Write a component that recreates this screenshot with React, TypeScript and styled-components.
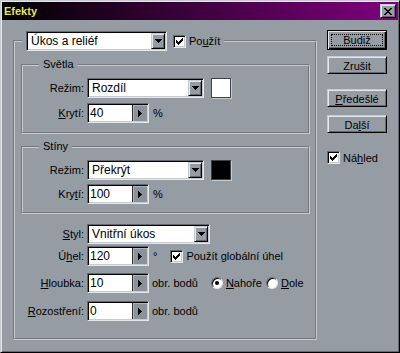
import React from 'react'
import styled, { createGlobalStyle, css } from 'styled-components'

const C = {
  face: '#959ca4',
  light: '#c6cbd0',
  hi: '#e4e7ea',
  shadow: '#62686e',
  spin: '#8b9299',
  title: '#ece44c',
}

const GlobalStyle = createGlobalStyle`
  html, body { margin: 0; padding: 0; }
  body {
    background: ${C.face};
    font-family: "Liberation Sans", Arial, sans-serif;
    font-size: 11px;
    color: #000;
  }
  * { box-sizing: border-box; }
`

const Window = styled.div`
  width: 400px;
  height: 353px;
  background: ${C.face};
  border: 1px solid;
  border-color: ${C.light} #000 #000 ${C.light};
  box-shadow: inset 1px 1px 0 ${C.hi}, inset -1px -1px 0 ${C.shadow};
  padding: 1px;
  display: flex;
  flex-direction: column;
`

const TitleBar = styled.div`
  height: 18px;
  flex: none;
  display: flex;
  align-items: center;
  justify-content: space-between;
  padding: 0 2px 0 2px;
  background: linear-gradient(to right, #000 0%, #80007f 100%);
`

const Title = styled.span`
  color: ${C.title};
  font-weight: bold;
  font-size: 11px;
`

const raised = css`
  background: ${C.face};
  border: 1px solid;
  border-color: ${C.light} #000 #000 ${C.light};
  box-shadow: inset 1px 1px 0 ${C.hi}, inset -1px -1px 0 ${C.shadow};
`

const CloseButton = styled.div`
  ${raised};
  width: 16px;
  height: 14px;
  display: flex;
  align-items: center;
  justify-content: center;
`

const Body = styled.div`
  flex: 1;
  display: flex;
  align-items: flex-start;
  padding: 11px 0 0 11px;
`

const Group = styled.fieldset<{ $w: number; $mt?: number }>`
  margin: ${p => p.$mt ?? 0}px 0 0 0;
  padding: 0;
  min-width: 0;
  width: ${p => p.$w}px;
  border: 2px groove ${C.light};
`

const Legend = styled.legend<{ $ml: number }>`
  margin-left: ${p => p.$ml}px;
  padding: 0 4px;
  line-height: 13px;
`

const LegendRow = styled.div`
  display: flex;
  align-items: center;
`

const GroupInner = styled.div<{ $pad: string }>`
  padding: ${p => p.$pad};
`

const Row = styled.div<{ $mt?: number }>`
  display: flex;
  align-items: center;
  height: 20px;
  margin-top: ${p => p.$mt ?? 0}px;
`

const Label = styled.label<{ $w: number }>`
  flex: none;
  width: ${p => p.$w}px;
  margin-right: 3px;
  text-align: right;
  white-space: nowrap;
`

const Text = styled.span<{ $ml?: number }>`
  margin-left: ${p => p.$ml ?? 0}px;
  white-space: nowrap;
`

const U = styled.span`
  text-decoration: underline;
  text-underline-offset: 1px;
`

const Field = styled.div<{ $w: number }>`
  flex: none;
  width: ${p => p.$w}px;
  height: 20px;
  display: flex;
  background: #fff;
  border: 1px solid;
  border-color: ${C.shadow} ${C.hi} ${C.hi} ${C.shadow};
  padding: 1px;
  box-shadow: inset 1px 1px 0 #000, inset -1px -1px 0 ${C.light};
`

const FieldText = styled.div`
  flex: 1;
  min-width: 0;
  padding-left: 3px;
  line-height: 16px;
  font-size: 12px;
  white-space: nowrap;
  overflow: hidden;
`

const SpinText = styled(FieldText)`
  padding-left: 1px;
`

const DropButton = styled.div`
  ${raised};
  flex: none;
  width: 14px;
  display: flex;
  align-items: center;
  justify-content: center;
`

const SpinButton = styled.div`
  flex: none;
  width: 15px;
  display: flex;
  align-items: center;
  justify-content: center;
  background: ${C.spin};
  border-left: 1px solid #2c3035;
  box-shadow: inset 1px 1px 0 #aeb4ba;
`

const Swatch = styled.div<{ $color: string }>`
  flex: none;
  width: 20px;
  height: 20px;
  margin-left: 7px;
  background: ${p => p.$color};
  border: 1px solid #3c4147;
  box-shadow: 1px 1px 0 ${C.light};
`

const Check = styled.label<{ $ml?: number; $mt?: number }>`
  display: flex;
  align-items: center;
  margin-left: ${p => p.$ml ?? 0}px;
  margin-top: ${p => p.$mt ?? 0}px;
  white-space: nowrap;
`

const CheckBox = styled.span`
  flex: none;
  width: 13px;
  height: 13px;
  margin-right: 3px;
  display: flex;
  align-items: center;
  justify-content: center;
  background: #fff;
  border: 1px solid;
  border-color: ${C.shadow} ${C.hi} ${C.hi} ${C.shadow};
  box-shadow: inset 1px 1px 0 #000, inset -1px -1px 0 ${C.light};
`

const RadioCircle = styled.span`
  flex: none;
  width: 12px;
  height: 12px;
  margin-right: 3px;
  border-radius: 50%;
  display: flex;
  align-items: center;
  justify-content: center;
  background: #fff;
  border: 1px solid;
  border-color: ${C.shadow} ${C.hi} ${C.hi} ${C.shadow};
  box-shadow: inset 1px 1px 0 #000;
`

const Dot = styled.span`
  width: 4px;
  height: 4px;
  border-radius: 50%;
  background: #000;
`

const Side = styled.div`
  margin-left: 10px;
  display: flex;
  flex-direction: column;
  width: 60px;
`

const Button = styled.div<{ $mt?: number; $default?: boolean }>`
  ${raised};
  width: 60px;
  height: 18px;
  margin-top: ${p => p.$mt ?? 0}px;
  display: flex;
  align-items: center;
  justify-content: center;
  padding-top: 1px;
  ${p =>
    p.$default &&
    css`
      height: 20px;
      margin-top: -1px;
      border-color: #000;
      box-shadow: inset 1px 1px 0 ${C.hi}, inset -1px -1px 0 #000, inset -2px -2px 0 ${C.shadow};
      padding: 3px;
    `}
`

const Focus = styled.span`
  flex: 1;
  align-self: stretch;
  display: flex;
  align-items: center;
  justify-content: center;
  border: 1px dotted #000;
`

const px = { shapeRendering: 'crispEdges' as const }

const DownArrow = () => (
  <svg width="7" height="4" viewBox="0 0 7 4" style={px}>
    <path d="M0 0h7v1h-1v1h-1v1h-1v1h-1v-1h-1v-1h-1v-1h-1z" fill="#000" />
  </svg>
)

const RightArrow = () => (
  <svg width="4" height="7" viewBox="0 0 4 7" style={px}>
    <path d="M0 0h1v1h1v1h1v1h1v1h-1v1h-1v1h-1v1h-1z" fill="#000" />
  </svg>
)

const CloseGlyph = () => (
  <svg width="8" height="7" viewBox="0 0 8 7" style={px}>
    <path
      d="M0 0h2v1h-2zM6 0h2v1h-2zM1 1h2v1h-2zM5 1h2v1h-2zM2 2h4v1h-4zM3 3h2v1h-2zM2 4h4v1h-4zM1 5h2v1h-2zM5 5h2v1h-2zM0 6h2v1h-2zM6 6h2v1h-2z"
      fill="#000"
    />
  </svg>
)

const CheckGlyph = () => (
  <svg width="7" height="7" viewBox="0 0 7 7" style={px}>
    <path
      d="M6 0h1v1h-1zM5 1h2v1h-2zM0 2h1v1h-1zM4 2h3v1h-3zM0 3h2v1h-2zM3 3h3v1h-3zM0 4h5v1h-5zM1 5h3v1h-3zM2 6h1v1h-1z"
      fill="#000"
    />
  </svg>
)

const Select = ({ w, value }: { w: number; value: string }) => (
  <Field $w={w}>
    <FieldText>{value}</FieldText>
    <DropButton>
      <DownArrow />
    </DropButton>
  </Field>
)

const Spin = ({ value }: { value: string }) => (
  <Field $w={62}>
    <SpinText>{value}</SpinText>
    <SpinButton>
      <RightArrow />
    </SpinButton>
  </Field>
)

const CheckItem = ({ ml, mt, children }: { ml?: number; mt?: number; children: React.ReactNode }) => (
  <Check $ml={ml} $mt={mt}>
    <CheckBox>
      <CheckGlyph />
    </CheckBox>
    <Text>{children}</Text>
  </Check>
)

const RadioItem = ({ ml, checked, children }: { ml?: number; checked?: boolean; children: React.ReactNode }) => (
  <Check $ml={ml}>
    <RadioCircle>{checked && <Dot />}</RadioCircle>
    <Text>{children}</Text>
  </Check>
)

export default function App() {
  return (
    <>
      <GlobalStyle />
      <Window>
        <TitleBar>
          <Title>Efekty</Title>
          <CloseButton>
            <CloseGlyph />
          </CloseButton>
        </TitleBar>
        <Body>
          <Group $w={304}>
            <Legend $ml={7}>
              <LegendRow>
                <Select w={141} value="Úkos a reliéf" />
                <CheckItem ml={6}>
                  Po<U>u</U>žít
                </CheckItem>
              </LegendRow>
            </Legend>
            <GroupInner $pad="7px 5px 17px 6px">
              <Group $w={289}>
                <Legend $ml={16}>Světla</Legend>
                <GroupInner $pad="7px 0 9px 0">
                  <Row>
                    <Label $w={61}>Režim:</Label>
                    <Select w={117} value="Rozdíl" />
                    <Swatch $color="#fff" />
                  </Row>
                  <Row $mt={5}>
                    <Label $w={61}>
                      <U>K</U>rytí:
                    </Label>
                    <Spin value="40" />
                    <Text $ml={4}>%</Text>
                  </Row>
                </GroupInner>
              </Group>
              <Group $w={289} $mt={6}>
                <Legend $ml={16}>Stíny</Legend>
                <GroupInner $pad="7px 0 8px 0">
                  <Row>
                    <Label $w={61}>Režim:</Label>
                    <Select w={117} value="Překrýt" />
                    <Swatch $color="#000" />
                  </Row>
                  <Row $mt={4}>
                    <Label $w={61}>
                      Kry<U>t</U>í:
                    </Label>
                    <Spin value="100" />
                    <Text $ml={4}>%</Text>
                  </Row>
                </GroupInner>
              </Group>
              <Row $mt={10}>
                <Label $w={63}>
                  <U>S</U>tyl:
                </Label>
                <Select w={123} value="Vnitřní úkos" />
              </Row>
              <Row $mt={2}>
                <Label $w={63}>
                  Ú<U>h</U>el:
                </Label>
                <Spin value="120" />
                <Text $ml={4}>°</Text>
                <CheckItem ml={13}>
                  Použít <U>g</U>lobální úhel
                </CheckItem>
              </Row>
              <Row $mt={7}>
                <Label $w={63}>
                  <U>H</U>loubka:
                </Label>
                <Spin value="10" />
                <Text $ml={3}>obr. bodů</Text>
                <RadioItem ml={13} checked>
                  <U>N</U>ahoře
                </RadioItem>
                <RadioItem ml={4}>
                  <U>D</U>ole
                </RadioItem>
              </Row>
              <Row $mt={8}>
                <Label $w={63}>
                  <U>R</U>ozostření:
                </Label>
                <Spin value="0" />
                <Text $ml={3}>obr. bodů</Text>
              </Row>
            </GroupInner>
          </Group>
          <Side>
            <Button $default>
              <Focus>Budiž</Focus>
            </Button>
            <Button $mt={6}>Zrušit</Button>
            <Button $mt={15}>
              <U>P</U>ředešlé
            </Button>
            <Button $mt={8}>
              Da<U>l</U>ší
            </Button>
            <CheckItem mt={18}>
              Ná<U>h</U>led
            </CheckItem>
          </Side>
        </Body>
      </Window>
    </>
  )
}
